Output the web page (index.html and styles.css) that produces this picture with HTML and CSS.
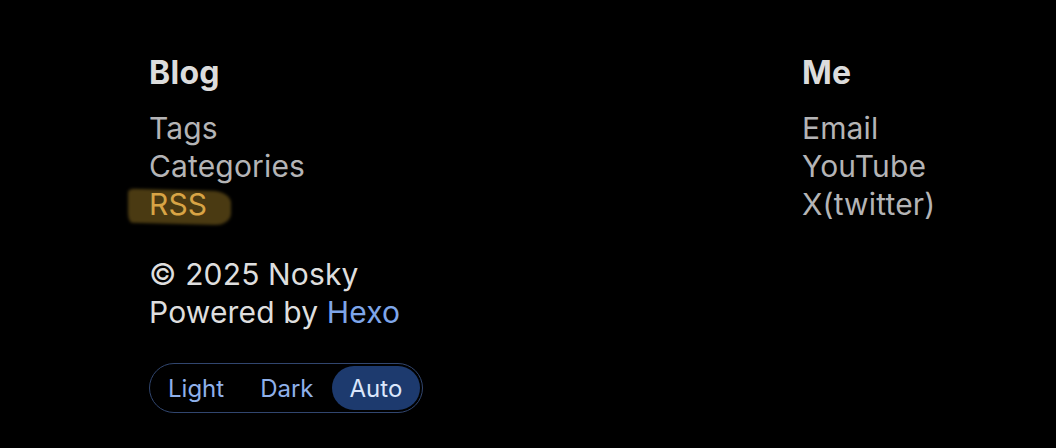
FILE: index.html
```html
<!DOCTYPE html>
<html lang="en">
<head>
<meta charset="utf-8">
<title>Footer</title>
<link rel="stylesheet" href="styles.css">
</head>
<body>
<footer class="footer">
  <div class="cols">
    <div class="col col-blog">
      <h3 class="col-title">Blog</h3>
      <ul class="links">
        <li><a href="#">Tags</a></li>
        <li><a href="#">Categories</a></li>
        <li><a href="#" class="rss">RSS</a></li>
      </ul>
      <div class="copy">
        <p>© 2025 Nosky</p>
        <p>Powered by <a href="#" class="hexo">Hexo</a></p>
      </div>
      <div class="theme-toggle">
        <button class="opt">Light</button>
        <button class="opt">Dark</button>
        <button class="opt active">Auto</button>
      </div>
    </div>
    <div class="col col-me">
      <h3 class="col-title">Me</h3>
      <ul class="links">
        <li><a href="#">Email</a></li>
        <li><a href="#">YouTube</a></li>
        <li><a href="#">X(twitter)</a></li>
      </ul>
    </div>
  </div>
</footer>
</body>
</html>
```

FILE: styles.css
```css
* { box-sizing: border-box; }
html, body {
  margin: 0;
  background: #000;
  font-family: Inter, "Noto Sans", sans-serif;
}
.footer {
  padding: 54px 0 0 149px;
}
.cols {
  display: grid;
  grid-template-columns: 653px auto;
}
.col-title {
  margin: 0 0 17px;
  font-size: 32px;
  line-height: 38px;
  font-weight: 700;
  color: #dcdcdc;
  letter-spacing: 0.3px;
}
.links {
  list-style: none;
  margin: 0;
  padding: 0;
}
.links li {
  font-size: 30px;
  line-height: 38px;
  letter-spacing: 0.15px;
}
.links a {
  color: #b4b4b6;
  text-decoration: none;
}
.links a.rss {
  color: #d8a445;
  position: relative;
  isolation: isolate;
}
.links a.rss::before {
  content: "";
  position: absolute;
  left: -21px;
  right: -24px;
  top: 4px;
  bottom: -2px;
  background: rgba(92, 72, 22, 0.8);
  border-radius: 6px 18px 16px 4px / 4px 12px 12px 10px;
  transform: skewY(1.5deg);
  filter: blur(1.5px);
  z-index: -1;
}
.copy {
  margin-top: 32px;
}
.copy p {
  margin: 0;
  font-size: 30px;
  line-height: 38px;
  color: #dedede;
  letter-spacing: 0.15px;
}
.hexo {
  color: #7ea6ea;
  text-decoration: none;
}
.theme-toggle {
  margin-top: 32px;
  display: inline-flex;
  align-items: center;
  height: 50px;
  padding: 2px;
  border: 1.5px solid #31466f;
  border-radius: 25px;
}
.opt {
  font-family: Inter, "Noto Sans", sans-serif;
  font-size: 24px;
  background: none;
  border: none;
  color: #8fb0ea;
  height: 44px;
  padding: 0 18px 0 16px;
  border-radius: 22px;
  cursor: pointer;
}
.opt + .opt {
  padding-left: 18px;
}
.opt.active {
  background: #1d3a6e;
  color: #dbe6fb;
  padding: 0 18px;
}
```
